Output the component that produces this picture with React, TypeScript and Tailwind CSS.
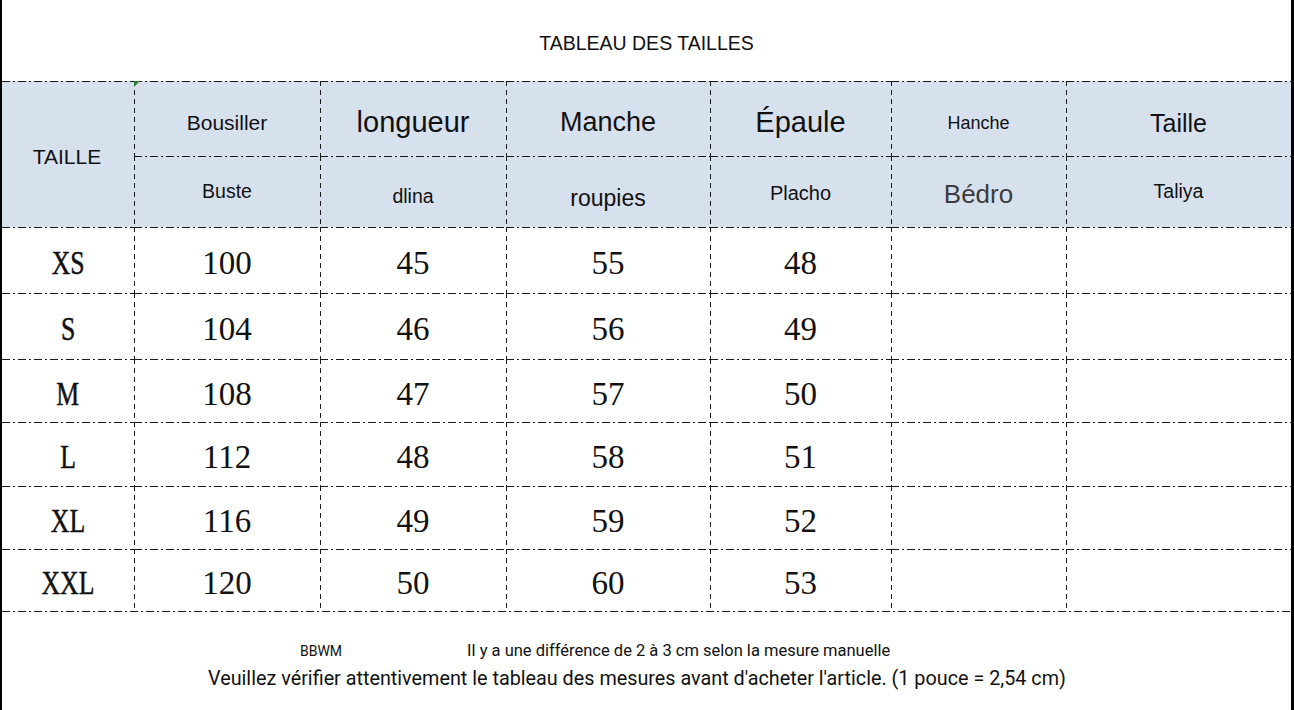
import React from 'react';

const SIZES = [
  { s: 'XS', v: ['100', '45', '55', '48'] },
  { s: 'S', v: ['104', '46', '56', '49'] },
  { s: 'M', v: ['108', '47', '57', '50'] },
  { s: 'L', v: ['112', '48', '58', '51'] },
  { s: 'XL', v: ['116', '49', '59', '52'] },
  { s: 'XXL', v: ['120', '50', '60', '53'] },
];

// dash-dot line on top, dashed line on the left
const lineTL =
  'bg-[image:repeating-linear-gradient(90deg,#1a1a1a_0_8px,transparent_8px_11px,#1a1a1a_11px_13px,transparent_13px_16px),repeating-linear-gradient(180deg,#1a1a1a_0_5px,transparent_5px_9px)] bg-[length:100%_1px,1px_100%] bg-no-repeat';
const lineT =
  'bg-[image:repeating-linear-gradient(90deg,#1a1a1a_0_8px,transparent_8px_11px,#1a1a1a_11px_13px,transparent_13px_16px)] bg-[length:100%_1px] bg-no-repeat';

const sans = "font-['Liberation_Sans',Arial,sans-serif]";
const serif = "font-['Liberation_Serif','Times_New_Roman',serif]";

const HEAD_TOP = [
  { t: 'Bousiller', c: 'text-[21px] pt-[9px]' },
  { t: 'longueur', c: 'text-[29px] pt-[8px]' },
  { t: 'Manche', c: 'text-[27px] pt-[7px]' },
  { t: 'Épaule', c: 'text-[29px] pt-[8px]' },
  { t: 'Hanche', c: 'text-[18px] pt-[9px]' },
  { t: 'Taille', c: 'text-[25px] pt-[11px]' },
];

const HEAD_BOTTOM = [
  { t: 'Buste', c: 'text-[19.5px] pt-[1px]' },
  { t: 'dlina', c: 'text-[19.5px] pt-[11px]' },
  { t: 'roupies', c: 'text-[23px] pt-[13px]' },
  { t: 'Placho', c: 'text-[20px] pt-[2px]' },
  { t: 'Bédro', c: 'text-[26px] pt-[5px] text-[#3c3c3c]' },
  { t: 'Taliya', c: 'text-[19.5px] pt-[1px]' },
];

const SizeChart: React.FC = () => {
  return (
    <div className="w-[1294px] h-[710px] bg-white border-l-2 border-r-[3px] border-black flex flex-col text-[#111]">
      <div className={`h-[81px] flex items-center justify-center pt-[7px] text-[19.5px] ${sans}`}>
        TABLEAU DES TAILLES
      </div>

      <div className="grid grid-cols-[132px_186px_186px_204px_181px_175px_1fr] grid-rows-[75px_71px_66px_66px_63px_64px_63px_62px]">
        <div className={`row-span-2 bg-[#d7e1ee] flex items-center justify-center pt-[6px] pr-[2px] text-[21px] ${sans} ${lineT}`}>
          TAILLE
        </div>
        {HEAD_TOP.map((h, i) => (
          <div key={h.t} className={`relative bg-[#d7e1ee] flex items-center justify-center ${sans} ${h.c} ${lineTL}`}>
            {i === 0 && (
              <span className="absolute left-0 top-0 w-0 h-0 border-t-[6px] border-t-[#2f7d32] border-r-[6px] border-r-transparent" />
            )}
            {h.t}
          </div>
        ))}
        {HEAD_BOTTOM.map((h) => (
          <div key={h.t} className={`bg-[#d7e1ee] flex items-center justify-center ${sans} ${h.c} ${lineTL}`}>
            {h.t}
          </div>
        ))}

        {SIZES.map((row) => (
          <React.Fragment key={row.s}>
            <div className={`flex items-center justify-center pt-[8px] text-[33px] ${serif} ${lineT}`}>
              <span className="inline-block scale-x-[0.78] [-webkit-text-stroke:0.5px_#111]">{row.s}</span>
            </div>
            {row.v.map((v, i) => (
              <div key={i} className={`flex items-center justify-center pt-[8px] text-[33px] ${serif} ${lineTL}`}>
                {v}
              </div>
            ))}
            <div className={lineTL} />
            <div className={lineTL} />
          </React.Fragment>
        ))}
      </div>
      <div className={`h-px ${lineT}`} />

      <div className={`flex flex-col font-['Roboto',sans-serif]`}>
        <div className="mt-[30px] flex items-center pl-[298px] h-[18px]">
          <span className="text-[14px]">BBWM</span>
          <span className="ml-[125px] text-[16.5px]">
            Il y a une différence de 2 à 3 cm selon la mesure manuelle
          </span>
        </div>
        <div className="mt-[7px] h-[24px] flex items-center pl-[206px] text-[19.8px]">
          Veuillez vérifier attentivement le tableau des mesures avant d'acheter l'article. (1 pouce = 2,54 cm)
        </div>
      </div>
    </div>
  );
};

export default function App() {
  return <SizeChart />;
}
